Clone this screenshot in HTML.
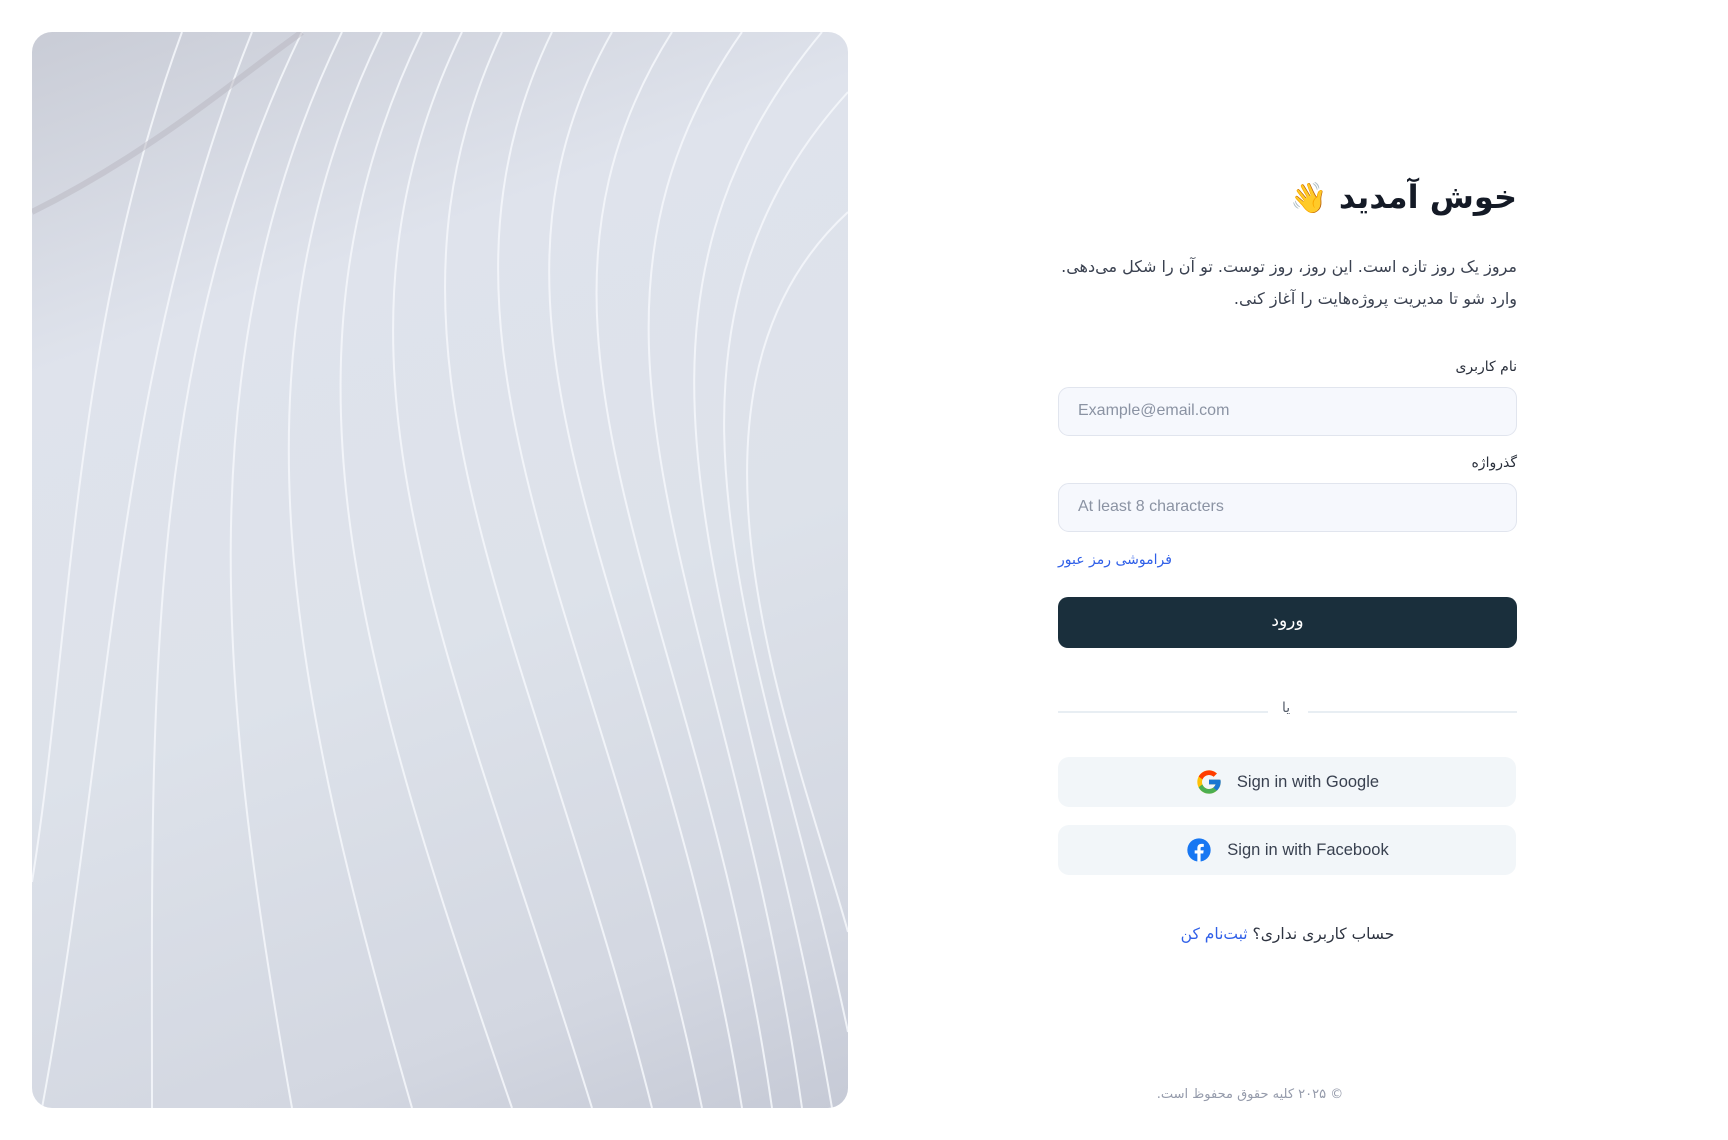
<!DOCTYPE html>
<html><head><meta charset="utf-8">
<style>
*{box-sizing:border-box;margin:0;padding:0}
body{width:1728px;height:1140px;background:#fff;position:relative;overflow:hidden;font-family:"Liberation Sans","Noto Sans CJK SC",sans-serif}
.panel{position:absolute;left:32px;top:32px;width:816px;height:1076px;border-radius:20px;overflow:hidden;background:linear-gradient(160deg,#c9ccd6 0%,#dfe3ec 25%,#dde2ea 55%,#d3d7e1 85%,#c6cad6 100%)}
.r{position:absolute;right:211px;text-align:right;direction:rtl}
.fa{font-family:"DejaVu Sans","Noto Sans CJK SC",sans-serif}
.in{position:absolute;left:1058px;width:459px;height:49px;border:1.5px solid #e1e5ee;background:#f6f8fd;border-radius:11px;color:#8b93a3;font-size:16px;padding:14px 0 0 19px}
.btn{position:absolute;left:1058px;width:459px;height:51px;border-radius:10px;background:#1a2f3c;color:#fff;font-size:17px;text-align:center;line-height:49px}
.soc{position:absolute;left:1058px;width:458px;height:50px;border-radius:11px;background:#f2f6f9;color:#394150;font-size:16.5px;display:flex;align-items:center;justify-content:center;gap:14px}
</style></head><body>
<div class="panel">
<svg width="816" height="1076" viewBox="0 0 816 1076">
<g fill="none" stroke="#f6f8fc" stroke-width="2" opacity="0.85">
<path d="M150 0 C40 300 40 600 0 850"/>
<path d="M220 0 C80 350 80 700 10 1076"/>
<path d="M270 0 C110 330 120 680 120 1076"/>
<path d="M310 0 C150 330 190 680 260 1076"/>
<path d="M350 0 C190 330 260 660 380 1076"/>
<path d="M390 0 C230 330 330 640 480 1076"/>
<path d="M430 0 C270 330 420 620 560 1076"/>
<path d="M470 0 C320 320 500 600 620 1076"/>
<path d="M520 0 C370 310 570 590 670 1076"/>
<path d="M580 0 C410 300 630 580 710 1076"/>
<path d="M640 0 C450 300 670 580 740 1076"/>
<path d="M710 0 C500 300 700 580 770 1076"/>
<path d="M790 0 C540 300 720 600 800 1076"/>
<path d="M816 60 C580 320 740 640 816 1000"/>
<path d="M816 180 C620 360 760 700 816 900"/>
</g>
<path d="M0 180 C120 120 200 50 270 0" stroke="#b8b6c0" stroke-width="6" fill="none" opacity=".5"/>
</svg>
</div>

<div class="r fa" style="top:178px;font-size:32px;font-weight:bold;color:#141a26">خوش آمدید <span style="font-size:30px">👋</span></div>
<div class="r fa" style="top:251px;font-size:16px;color:#3a4150;line-height:32px;width:520px">مروز یک روز تازه است. این روز، روز توست. تو آن را شکل می‌دهی.<br>وارد شو تا مدیریت پروژه‌هایت را آغاز کنی.</div>
<div class="r fa" style="top:359px;font-size:14px;color:#2a303c">نام کاربری</div>
<div class="in" style="top:387px">Example@email.com</div>
<div class="r fa" style="top:455px;font-size:14px;color:#2a303c">گذرواژه</div>
<div class="in" style="top:483px">At least 8 characters</div>
<div class="fa" style="position:absolute;left:1058px;top:552px;font-size:14px;color:#2f5fe8;direction:rtl">فراموشی رمز عبور</div>
<div class="btn fa" style="top:597px">ورود</div>
<div style="position:absolute;left:1058px;top:711px;width:210px;height:2px;background:#e8eef3"></div>
<div style="position:absolute;left:1308px;top:711px;width:209px;height:2px;background:#e8eef3"></div>
<div class="fa" style="position:absolute;left:1282px;top:700px;font-size:14px;color:#555d6b">یا</div>
<div class="soc" style="top:757px">
<svg width="28" height="28" viewBox="0 0 48 48"><path fill="#FFC107" d="M43.6 20.1H42V20H24v8h11.3C33.7 32.7 29.2 36 24 36c-6.6 0-12-5.4-12-12s5.4-12 12-12c3.1 0 5.8 1.2 7.9 3.1l5.700-5.700C34 6.100 29.300 4 24 4 12.900 4 4 12.900 4 24s8.900 20 20 20 20-8.900 20-20c0-1.300-.100-2.600-.400-3.900z"/><path fill="#FF3D00" d="M6.3 14.7l6.6 4.8C14.7 15.1 19 12 24 12c3.1 0 5.8 1.2 7.9 3.1l5.7-5.7C34 6.1 29.3 4 24 4 16.3 4 9.7 8.3 6.3 14.7z"/><path fill="#4CAF50" d="M24 44c5.2 0 9.9-2 13.4-5.2l-6.2-5.2C29.2 35.1 26.7 36 24 36c-5.2 0-9.6-3.3-11.3-8l-6.5 5C9.5 39.6 16.2 44 24 44z"/><path fill="#1976D2" d="M43.6 20.1H42V20H24v8h11.3c-.8 2.2-2.2 4.2-4.1 5.6l6.2 5.2C37 39.2 44 34 44 24c0-1.3-.1-2.6-.4-3.9z"/></svg>
<span>Sign in with Google</span></div>
<div class="soc" style="top:825px">
<svg width="28" height="28" viewBox="0 0 48 48"><circle cx="24" cy="24" r="20" fill="#1877F2"/><path fill="#fff" d="M26.7 44V30h4.6l.7-5.4h-5.3v-3.4c0-1.6.4-2.6 2.7-2.6h2.8v-4.8c-.5-.1-2.2-.2-4.1-.2-4.1 0-6.9 2.5-6.9 7.1v3.9h-4.6V30h4.6v14z"/></svg>
<span>Sign in with Facebook</span></div>
<div class="fa" style="position:absolute;left:1058px;width:459px;top:925px;text-align:center;direction:rtl;font-size:15.5px;color:#2d3340">حساب کاربری نداری؟ <span style="color:#2f5fe8">ثبت‌نام کن</span></div>
<div class="fa" style="position:absolute;left:1100px;width:300px;top:1087px;text-align:center;direction:rtl;font-size:13px;color:#959bab">© ۲۰۲۵ کلیه حقوق محفوظ است.</div>
</body></html>
